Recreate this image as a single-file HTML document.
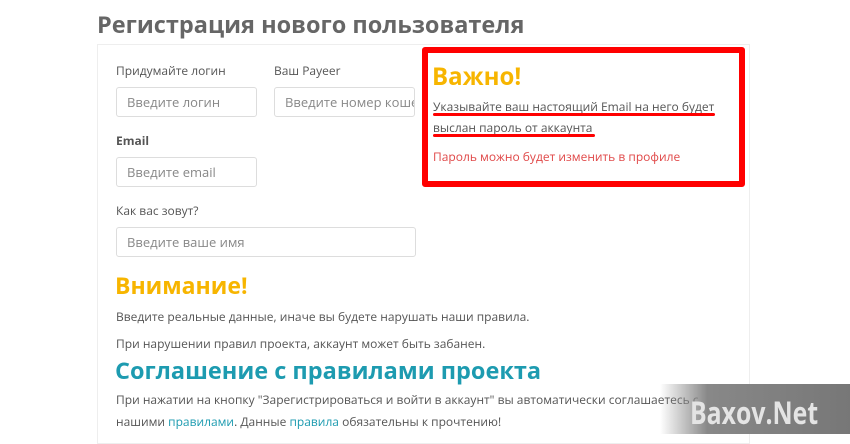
<!DOCTYPE html><html><head><meta charset="utf-8"><style>
body{margin:0;width:850px;height:434px;background:#fff;position:relative;overflow:hidden;font-family:"Open Sans","Liberation Sans","DejaVu Sans",sans-serif;color:#555}
.a{position:absolute;white-space:nowrap}
.lbl{font-size:12px;color:#555}
.in{position:absolute;border:1px solid #ddd;border-radius:3px;height:30px;box-sizing:border-box;font-size:13px;color:#888;padding:7px 10px;line-height:15px;overflow:hidden;white-space:nowrap}
.t{font-size:12px;color:#555}
</style></head><body>
<div class="a" style="left:97px;top:8px;font-size:23.5px;font-weight:bold;color:#666">Регистрация нового пользователя</div>
<div class="a" style="left:97px;top:44px;width:653px;height:400px;border:1px solid #eee;box-sizing:border-box"></div>
<div class="a lbl" style="left:116px;top:62px">Придумайте логин</div>
<div class="a lbl" style="left:274px;top:62px">Ваш Payeer</div>
<div class="in" style="left:116px;top:87px;width:141px">Введите логин</div>
<div class="in" style="left:274px;top:87px;width:141px">Введите номер кошелька</div>
<div class="a lbl" style="left:116px;top:132px;font-weight:bold">Email</div>
<div class="in" style="left:116px;top:157px;width:141px">Введите email</div>
<div class="a lbl" style="left:116px;top:202px">Как вас зовут?</div>
<div class="in" style="left:116px;top:227px;width:300px">Введите ваше имя</div>
<div class="a" style="left:422px;top:47px;width:323px;height:140px;border:6px solid #f00;border-radius:3px;box-sizing:border-box"></div>
<div class="a" style="left:432px;top:60px;font-size:24px;font-weight:bold;color:#f7b500">Важно!</div>
<div class="a t" style="left:433px;top:98px">Указывайте ваш настоящий Email на него будет</div>
<div class="a" style="left:433px;top:113px;width:282px;height:3px;background:#f00;border-radius:2px"></div>
<div class="a t" style="left:433px;top:119px">выслан пароль от аккаунта</div>
<div class="a" style="left:433px;top:134px;width:162px;height:3px;background:#f00;border-radius:2px"></div>
<div class="a t" style="left:433px;top:148px;color:#e04848">Пароль можно будет изменить в профиле</div>
<div class="a" style="left:115px;top:269px;font-size:23px;font-weight:bold;color:#f7b500">Внимание!</div>
<div class="a t" style="left:116px;top:308px">Введите реальные данные, иначе вы будете нарушать наши правила.</div>
<div class="a t" style="left:116px;top:335px">При нарушении правил проекта, аккаунт может быть забанен.</div>
<div class="a" style="left:115px;top:354px;font-size:23.5px;font-weight:bold;color:#1d9bb0">Соглашение с правилами проекта</div>
<div class="a t" style="left:116px;top:391px">При нажатии на кнопку "Зарегистрироваться и войти в аккаунт" вы автоматически соглашаетесь с</div>
<div class="a t" style="left:116px;top:413px">нашими <span style="color:#1d9bb0">правилами</span>. Данные <span style="color:#1d9bb0">правила</span> обязательны к прочтению!</div>
<div class="a" style="left:660px;top:384px;width:190px;height:50px;background:linear-gradient(90deg,rgba(150,150,150,0),#888 25%,#777)"></div>
<div class="a" style="left:690px;top:392px;font-size:31px;font-weight:bold;color:#e4e4e4;transform:scaleX(0.8);transform-origin:left top">Baxov.Net</div>
</body></html>
